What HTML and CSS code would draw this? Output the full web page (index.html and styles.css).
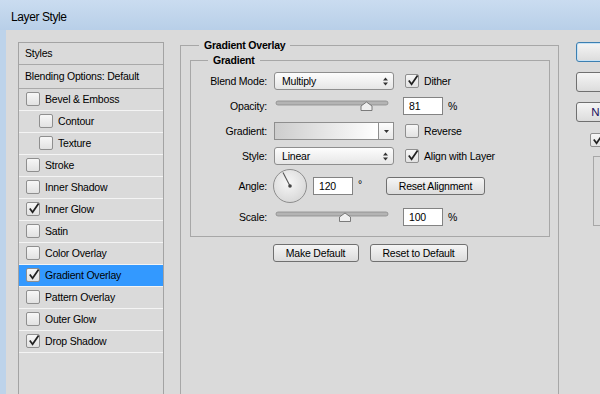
FILE: index.html
```html
<!DOCTYPE html>
<html lang="en">
<head>
    <meta charset="UTF-8">
    <title>Layer Style</title>
    <link rel="stylesheet" href="styles.css">
</head>
<body>
<div class="window">
    <div class="titlebar">Layer Style</div>
    <div class="frame">
        <ul class="styles-list">
            <li class="head head-first">Styles</li>
            <li class="head head-blend">Blending Options: Default</li>
            <li><span class="cb"></span>Bevel &amp; Emboss</li>
            <li class="sub"><span class="cb"></span>Contour</li>
            <li class="sub"><span class="cb"></span>Texture</li>
            <li><span class="cb"></span>Stroke</li>
            <li><span class="cb"></span>Inner Shadow</li>
            <li><span class="cb"><svg viewBox="0 0 14 14"><path d="M3 7 L6 11 L12.5 1.5"/></svg></span>Inner Glow</li>
            <li><span class="cb"></span>Satin</li>
            <li><span class="cb"></span>Color Overlay</li>
            <li class="selected"><span class="cb"><svg viewBox="0 0 14 14"><path d="M3 7 L6 11 L12.5 1.5"/></svg></span>Gradient Overlay</li>
            <li><span class="cb"></span>Pattern Overlay</li>
            <li><span class="cb"></span>Outer Glow</li>
            <li><span class="cb"><svg viewBox="0 0 14 14"><path d="M3 7 L6 11 L12.5 1.5"/></svg></span>Drop Shadow</li>
        </ul>

        <fieldset class="group effect">
            <legend>Gradient Overlay</legend>
            <fieldset class="group gradient-box">
                <legend>Gradient</legend>

                <div class="row">
                    <span class="lbl">Blend Mode:</span>
                    <div class="main select">Multiply
                        <svg class="spin" width="5" height="9" viewBox="0 0 5 9"><path d="M0 3.5 L2.5 0.5 L5 3.5Z M0 5.5 L2.5 8.5 L5 5.5Z"/></svg>
                    </div>
                    <span class="cb"><svg viewBox="0 0 14 14"><path d="M3 7 L6 11 L12.5 1.5"/></svg></span>
                    <span class="opt">Dither</span>
                </div>

                <div class="row">
                    <span class="lbl">Opacity:</span>
                    <svg class="main slider" width="120" height="18" viewBox="0 0 120 18">
                        <rect x="2" y="4" width="112" height="4" rx="2" class="track"/>
                        <path class="thumb" d="M92.5 5 L98 9 L98 13.5 L87 13.5 L87 9Z"/>
                    </svg>
                    <span class="field">81</span>
                    <span class="unit">%</span>
                </div>

                <div class="row">
                    <span class="lbl">Gradient:</span>
                    <div class="main gradient">
                        <span class="swatch"></span>
                        <span class="drop"><svg width="5" height="3" viewBox="0 0 5 3"><path d="M0 0 L5 0 L2.5 3Z"/></svg></span>
                    </div>
                    <span class="cb"></span>
                    <span class="opt">Reverse</span>
                </div>

                <div class="row">
                    <span class="lbl">Style:</span>
                    <div class="main select">Linear
                        <svg class="spin" width="5" height="9" viewBox="0 0 5 9"><path d="M0 3.5 L2.5 0.5 L5 3.5Z M0 5.5 L2.5 8.5 L5 5.5Z"/></svg>
                    </div>
                    <span class="cb"><svg viewBox="0 0 14 14"><path d="M3 7 L6 11 L12.5 1.5"/></svg></span>
                    <span class="opt">Align with Layer</span>
                </div>

                <div class="row angle-row">
                    <span class="lbl">Angle:</span>
                    <svg class="dial" width="34" height="34" viewBox="0 0 34 34">
                        <defs>
                            <radialGradient id="dialFill" cx="45%" cy="40%" r="65%">
                                <stop offset="0" stop-color="#f7f7f7"/>
                                <stop offset="1" stop-color="#d6d6d6"/>
                            </radialGradient>
                        </defs>
                        <circle cx="17" cy="17" r="16.5" fill="url(#dialFill)" stroke="#8d8d8d"/>
                        <line x1="17" y1="17" x2="10" y2="3.5" stroke="#555" stroke-width="1.1"/>
                        <circle cx="17" cy="17" r="1.8" fill="#444"/>
                    </svg>
                    <span class="field angle-field">120</span>
                    <span class="deg">°</span>
                    <button class="btn btn-align">Reset Alignment</button>
                </div>

                <div class="row last">
                    <span class="lbl">Scale:</span>
                    <svg class="main slider" width="120" height="18" viewBox="0 0 120 18">
                        <rect x="2" y="4" width="112" height="4" rx="2" class="track"/>
                        <path class="thumb" d="M71 5 L76.5 9 L76.5 13.5 L65.5 13.5 L65.5 9Z"/>
                    </svg>
                    <span class="field">100</span>
                    <span class="unit">%</span>
                </div>
            </fieldset>

            <div class="defaults">
                <button class="btn btn-make">Make Default</button>
                <button class="btn btn-reset">Reset to Default</button>
            </div>
        </fieldset>

        <div class="side">
            <button class="btn side-btn default-btn">OK</button>
            <button class="btn side-btn">Cancel</button>
            <button class="btn side-btn new-btn">New Style...</button>
            <div class="preview">
                <span class="cb"><svg viewBox="0 0 14 14"><path d="M3 7 L6 11 L12.5 1.5"/></svg></span>
                <span class="opt">Preview</span>
            </div>
            <div class="preview-box"></div>
        </div>
    </div>
</div>
</body>
</html>
```

FILE: styles.css
```css
* {
    box-sizing: border-box;
}

html, body {
    margin: 0;
    padding: 0;
}

body {
    width: 600px;
    height: 394px;
    overflow: hidden;
    font-family: 'Liberation Sans', Arial, sans-serif;
    font-size: 10.5px;
    letter-spacing: -0.2px;
    color: #000;
    background: #dadada;
}

.window {
    display: flex;
    flex-direction: column;
    width: 720px;
    height: 394px;
}

.titlebar {
    flex: none;
    height: 30px;
    padding: 10px 0 0 11px;
    font-size: 12px;
    line-height: 14px;
    letter-spacing: -0.4px;
    background: linear-gradient(#cadcf0, #b8cfe8);
}

.frame {
    flex: 1;
    display: flex;
    align-items: stretch;
    padding: 12px 0 0 12px;
    border-left: 6px solid #bdd3ea;
    background: #dadada;
}

/* styles list */
.styles-list {
    flex: none;
    width: 146px;
    list-style: none;
    margin: 0;
    padding: 0;
    border: 1px solid #a3a3a3;
    border-bottom: none;
}

.styles-list li {
    display: flex;
    align-items: center;
    height: 22px;
    padding-left: 7px;
    padding-bottom: 1px;
    border-bottom: 1px solid #f4f4f4;
    white-space: nowrap;
}

.styles-list .head {
    padding-left: 6px;
    border-bottom-color: #a9a9a9;
}

.styles-list .head-blend {
    height: 24px;
}

.styles-list .sub {
    padding-left: 20px;
}

.styles-list .selected {
    background: #3399ff;
}

.cb {
    flex: none;
    display: inline-block;
    width: 14px;
    height: 14px;
    margin-right: 5px;
    border: 1px solid #8f8f8f;
    border-radius: 2px;
    background: linear-gradient(#f7f7f7, #e2e2e2);
    position: relative;
}

.cb svg {
    position: absolute;
    left: 0;
    top: -1px;
    width: 13px;
    height: 13px;
    fill: none;
    stroke: #222;
    stroke-width: 1.9;
    overflow: visible;
}

/* group boxes */
.group {
    margin: 0;
    min-width: 0;
    border: 1px solid #a7a7a7;
}

.group > legend {
    font-weight: bold;
    line-height: 12px;
    padding: 0 5px;
}

.effect {
    flex: none;
    width: 379px;
    margin: -3px 0 0 16px;
    padding: 3px 8px 0 9px;
    border-bottom: none;
}

.effect > legend {
    margin-left: 9px;
}

.gradient-box {
    padding: 6px 0 10px 0;
}

.gradient-box > legend {
    margin-left: 17px;
}

.row {
    display: flex;
    align-items: center;
    height: 18px;
    margin-bottom: 7px;
    white-space: nowrap;
}

.row.last {
    margin-bottom: 0;
}

.angle-row {
    height: 34px;
    margin-top: -3px;
    margin-bottom: 5px;
}

.lbl {
    flex: none;
    width: 76px;
    margin-right: 7px;
    text-align: right;
}

.main {
    flex: none;
    width: 120px;
    margin-right: 9px;
}

.row .cb {
    margin-left: 2px;
}

.opt {
    white-space: nowrap;
}

.select {
    display: flex;
    align-items: center;
    justify-content: space-between;
    height: 18px;
    padding: 0 5px 0 7px;
    border: 1px solid #8e8e8e;
    border-radius: 3px;
    background: linear-gradient(#fdfdfd, #e6e6e6);
}

.spin {
    fill: #333;
}

.slider .track {
    fill: #b4b4b4;
    stroke: #8c8c8c;
    stroke-width: 0.8;
}

.slider .thumb {
    fill: #efefef;
    stroke: #6e6e6e;
    stroke-width: 0.9;
}

.field {
    flex: none;
    display: flex;
    align-items: center;
    width: 40px;
    height: 18px;
    padding-left: 5px;
    border: 1px solid #838383;
    background: #fff;
}

.unit {
    margin-left: 5px;
}

.gradient {
    display: flex;
    height: 18px;
    border: 1px solid #8e8e8e;
}

.gradient .swatch {
    flex: 1;
    background: linear-gradient(90deg, #cdcdcd, #ffffff);
}

.gradient .drop {
    flex: none;
    display: flex;
    align-items: center;
    justify-content: center;
    width: 15px;
    border-left: 1px solid #8e8e8e;
    background: linear-gradient(#fdfdfd, #e8e8e8);
    fill: #333;
}

.dial {
    flex: none;
    margin-left: -1px;
}

.angle-field {
    margin-left: 6px;
}

.deg {
    margin-left: 5px;
    align-self: flex-start;
    margin-top: 9px;
}

.btn {
    height: 18px;
    padding: 0;
    font-family: inherit;
    font-size: inherit;
    letter-spacing: inherit;
    color: #000;
    border: 1px solid #707070;
    border-radius: 3px;
    background: linear-gradient(#f5f5f5, #dcdcdc);
}

.btn-align {
    width: 99px;
    margin-left: 24px;
}

.defaults {
    display: flex;
    justify-content: center;
    gap: 11px;
    margin-top: 7px;
}

.btn-make {
    width: 86px;
}

.btn-reset {
    width: 98px;
}

/* right column */
.side {
    flex: none;
    align-self: flex-start;
    display: flex;
    flex-direction: column;
    width: 92px;
    margin-left: 17px;
}

.side-btn {
    height: 20px;
    margin-bottom: 10px;
    font-size: 11.5px;
    letter-spacing: 0;
    color: #1b0f5e;
}

.default-btn {
    border-color: #3c7fb1;
    box-shadow: inset 0 0 0 1px #c7e2f5;
}

.new-btn {
    margin-bottom: 0;
}

.preview {
    display: flex;
    align-items: center;
    margin: 11px 0 0 14px;
}

.preview-box {
    width: 70px;
    height: 70px;
    margin: 9px 0 0 17px;
    border: 1px solid #a7a7a7;
}
```
